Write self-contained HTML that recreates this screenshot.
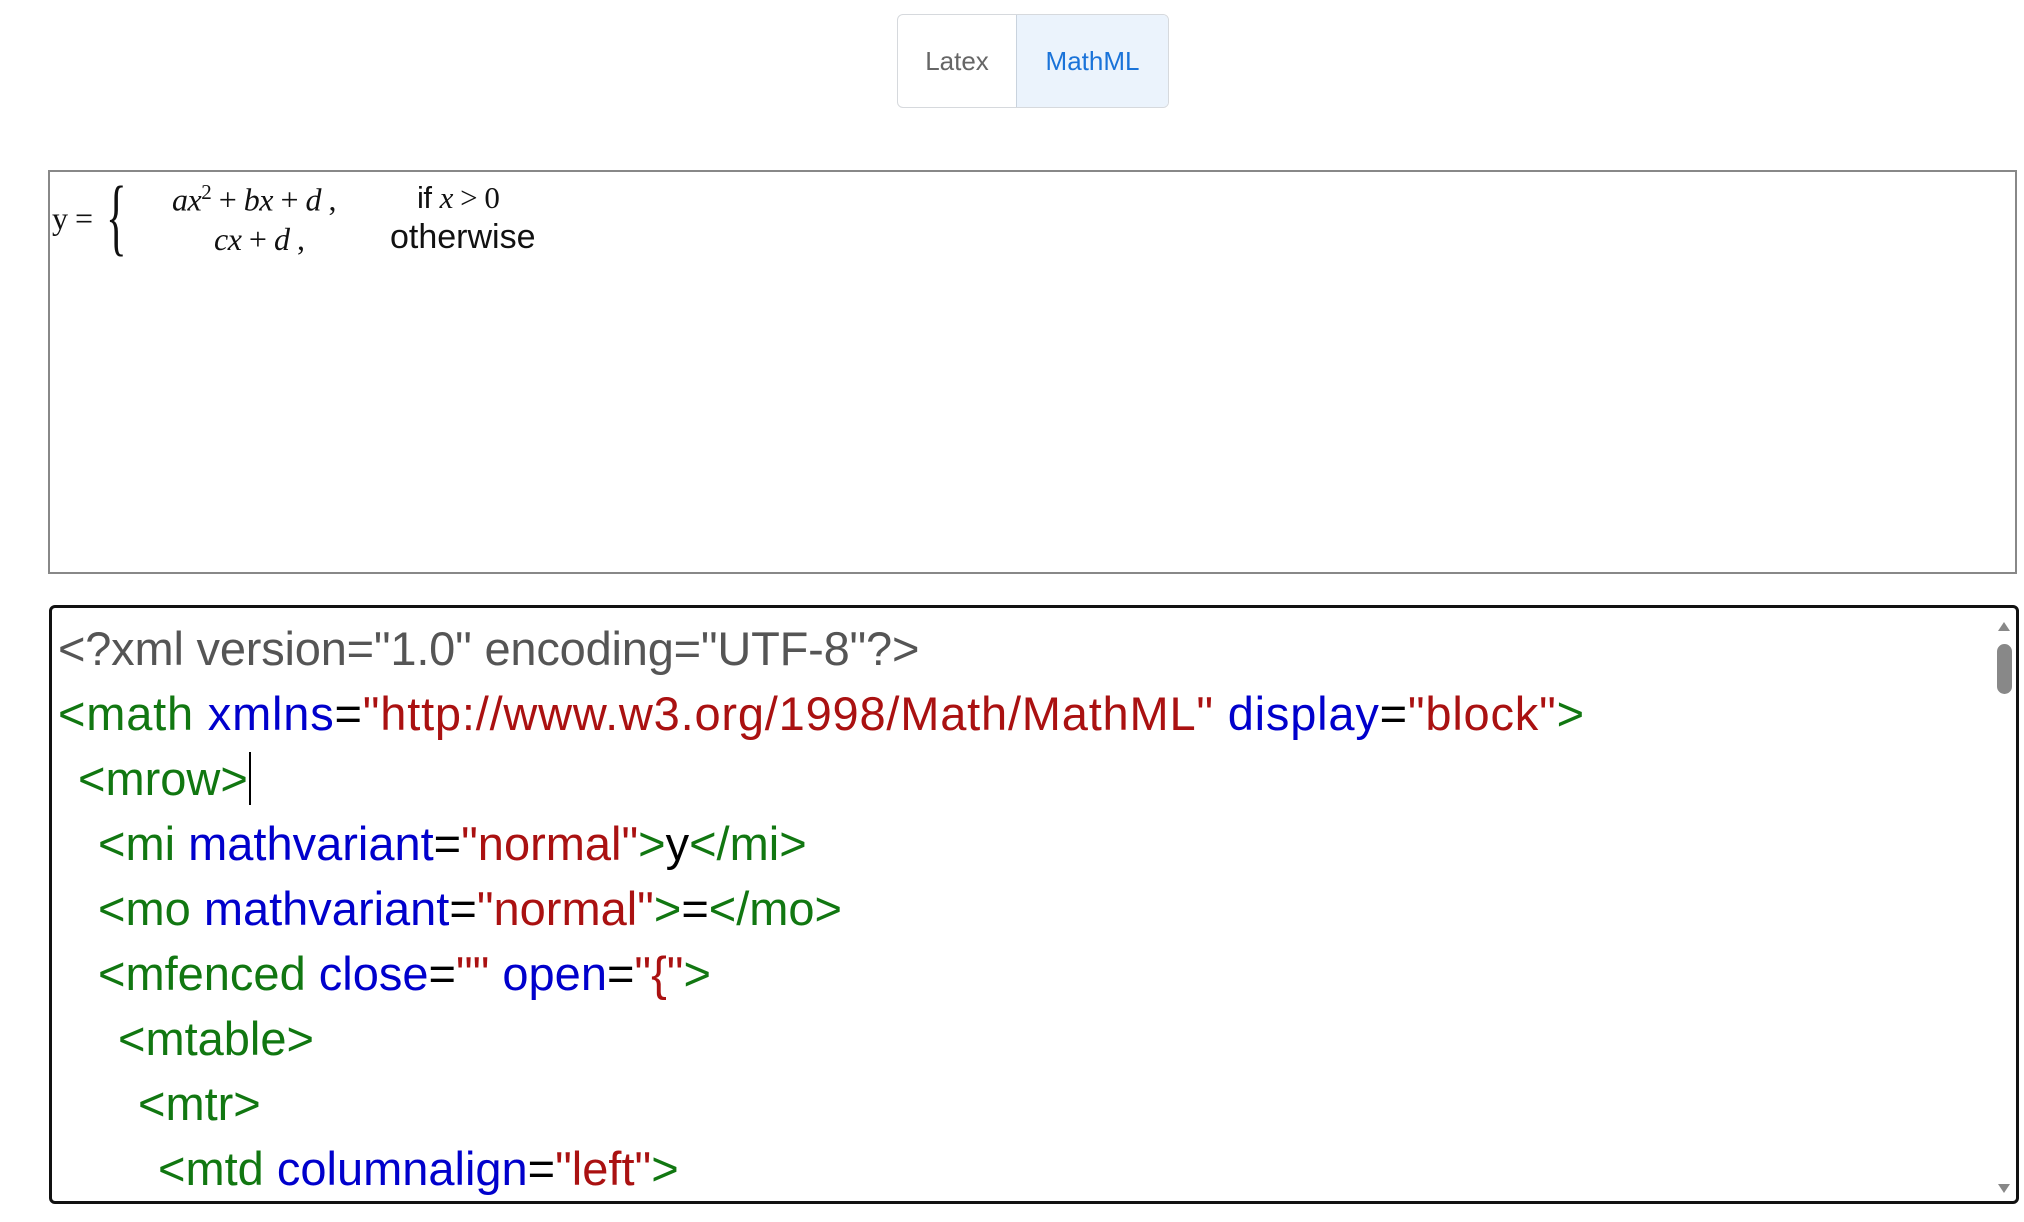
<!DOCTYPE html>
<html><head><meta charset="utf-8"><style>
body{margin:0;width:2024px;height:1222px;background:#fff;position:relative;overflow:hidden;font-family:"Liberation Sans",sans-serif}
.btns{position:absolute;left:897px;top:14px;width:272px;height:94px;border:1.5px solid #d6d9dd;border-radius:6px;box-sizing:border-box;display:flex;overflow:hidden}
.btns div{display:flex;align-items:center;justify-content:center;font-size:26px}
.b1{width:118px;color:#666;border-right:1.5px solid #c9d3de}
.b2{flex:1;background:#ebf3fc;color:#1a73d9}
.render{position:absolute;left:48px;top:170px;width:1969px;height:404px;border:2px solid #888;box-sizing:border-box}
.m{position:absolute;font-family:"Liberation Serif",serif;font-size:32px;color:#111;white-space:pre;letter-spacing:-0.5px}
.i{font-style:italic}
.code{position:absolute;left:49px;top:605px;width:1970px;height:599px;border:3px solid #111;border-radius:6px;box-sizing:border-box;overflow:hidden}
.ln{position:absolute;left:6px;font-size:47px;white-space:pre;line-height:65px}
.g{color:#555}.t{color:#117711}.a{color:#0000cc}.s{color:#aa1111}.k{color:#000}
.sb{position:absolute;right:4px;top:36px;width:15px;height:50px;background:#888;border-radius:8px}
</style></head><body>
<div class="btns"><div class="b1">Latex</div><div class="b2">MathML</div></div>
<div class="render">
<div class="m" style="left:2px;top:28px;font-size:32px">y =</div>
<div class="m" style="left:56px;top:-6px;font-size:86px;font-weight:100;transform:scaleX(0.5);transform-origin:left">{</div>
<div class="m" style="left:122px;top:8px"><span class="i">ax</span><sup style="font-size:21px">2</sup> + <span class="i">bx</span> + <span class="i">d</span> ,</div>
<div class="m" style="left:367px;top:8px;font-family:'Liberation Sans',sans-serif;font-size:31px">if <span class="i" style="font-family:'Liberation Serif',serif">x</span><span style="font-family:'Liberation Serif',serif"> &gt; 0</span></div>
<div class="m" style="left:164px;top:49px"><span class="i">cx</span> + <span class="i">d</span> ,</div>
<div class="m" style="left:340px;top:46px;font-family:'Liberation Sans',sans-serif;font-size:34px;letter-spacing:0">otherwise</div>
</div>
<div class="code">
<div class="ln g" style="top:8px;letter-spacing:-0.2px">&lt;?xml version="1.0" encoding="UTF-8"?&gt;</div>
<div class="ln" style="top:73px;letter-spacing:0.8px"><span class="t">&lt;math</span> <span class="a">xmlns</span>=<span class="s">"http://www.w3.org/1998/Math/MathML"</span> <span class="a">display</span>=<span class="s">"block"</span><span class="t">&gt;</span></div>
<div class="ln" style="top:138px;left:26px"><span class="t">&lt;mrow&gt;</span><span style="border-left:2px solid #000;margin-left:1px"></span></div>
<div class="ln" style="top:203px;left:46px"><span class="t">&lt;mi</span> <span class="a">mathvariant</span>=<span class="s">"normal"</span><span class="t">&gt;</span><span class="k">y</span><span class="t">&lt;/mi&gt;</span></div>
<div class="ln" style="top:268px;left:46px"><span class="t">&lt;mo</span> <span class="a">mathvariant</span>=<span class="s">"normal"</span><span class="t">&gt;</span><span class="k">=</span><span class="t">&lt;/mo&gt;</span></div>
<div class="ln" style="top:333px;left:46px"><span class="t">&lt;mfenced</span> <span class="a">close</span>=<span class="s">""</span> <span class="a">open</span>=<span class="s">"{"</span><span class="t">&gt;</span></div>
<div class="ln" style="top:398px;left:66px"><span class="t">&lt;mtable&gt;</span></div>
<div class="ln" style="top:463px;left:86px"><span class="t">&lt;mtr&gt;</span></div>
<div class="ln" style="top:528px;left:106px"><span class="t">&lt;mtd</span> <span class="a">columnalign</span>=<span class="s">"left"</span><span class="t">&gt;</span></div>
<div class="sb"></div>
<div style="position:absolute;right:6px;top:14px;width:0;height:0;border-left:6px solid transparent;border-right:6px solid transparent;border-bottom:9px solid #888"></div>
<div style="position:absolute;right:6px;bottom:8px;width:0;height:0;border-left:6px solid transparent;border-right:6px solid transparent;border-top:9px solid #888"></div>
</div>
</body></html>
